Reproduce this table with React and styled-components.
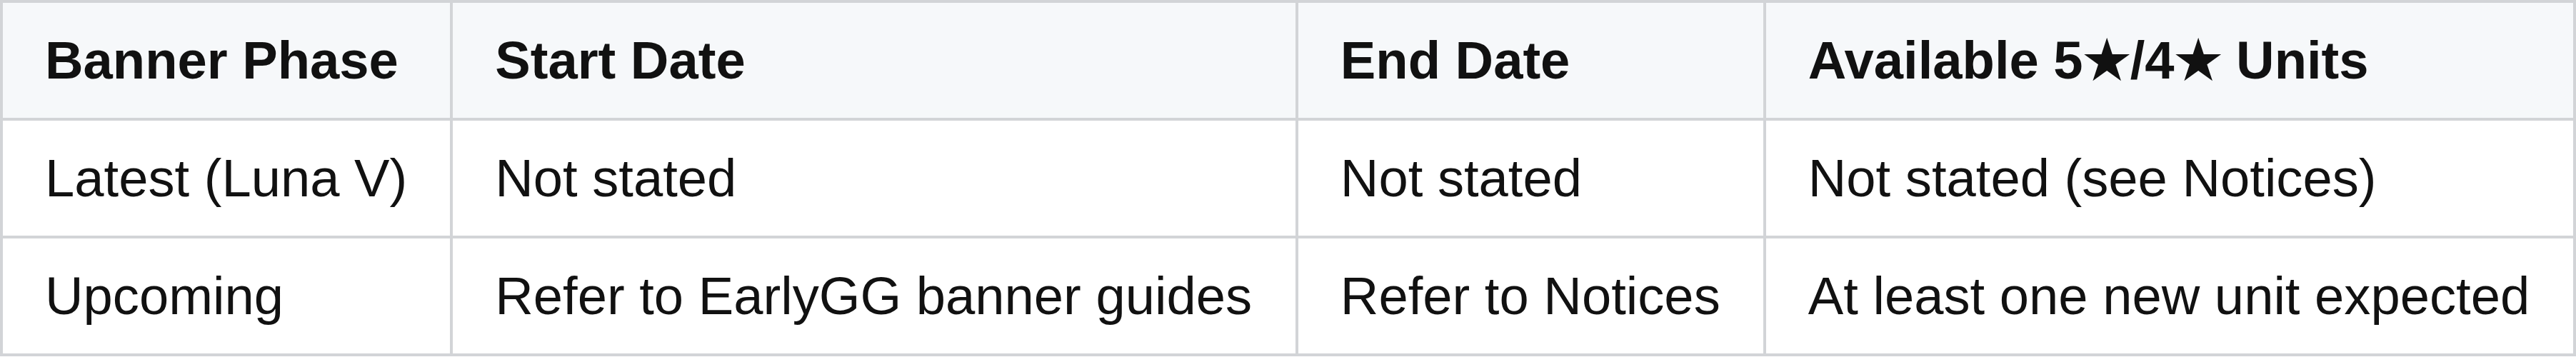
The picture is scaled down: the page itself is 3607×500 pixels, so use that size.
import React from 'react';
import styled, { createGlobalStyle } from 'styled-components';

const GlobalStyle = createGlobalStyle`
  html, body {
    margin: 0;
    padding: 0;
    background: #ffffff;
  }
`;

const Table = styled.table`
  width: 100%;
  border-collapse: collapse;
  font-family: "Liberation Sans", Arial, sans-serif;
  font-size: 74.2px;
  line-height: 110px;
  color: #111111;
`;

const HeadRow = styled.tr`
  background: #f6f8fa;
`;

const Row = styled.tr`
  background: #ffffff;
`;

const Cell = styled.td`
  border: 4.4px solid #d2d4d7;
  padding: 26px 59px 25px;
  text-align: left;
  white-space: nowrap;
  font-weight: ${(p) => (p.$head ? 700 : 400)};
`;

const columns = ['Banner Phase', 'Start Date', 'End Date', 'Available 5★/4★ Units'];

const rows = [
  ['Latest (Luna V)', 'Not stated', 'Not stated', 'Not stated (see Notices)'],
  ['Upcoming', 'Refer to EarlyGG banner guides', 'Refer to Notices', 'At least one new unit expected'],
];

export default function App() {
  return (
    <>
      <GlobalStyle />
      <Table>
        <thead>
          <HeadRow>
            {columns.map((c) => (
              <Cell as="th" $head key={c}>{c}</Cell>
            ))}
          </HeadRow>
        </thead>
        <tbody>
          {rows.map((r, i) => (
            <Row key={i}>
              {r.map((v, j) => (
                <Cell key={j}>{v}</Cell>
              ))}
            </Row>
          ))}
        </tbody>
      </Table>
    </>
  );
}
